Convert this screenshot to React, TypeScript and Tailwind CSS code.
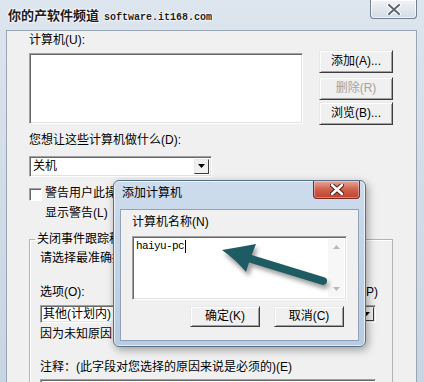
import type { ReactNode } from 'react'

function WinButton({ children, disabled, className = '' }: { children: ReactNode; disabled?: boolean; className?: string }) {
  return (
    <div
      className={`flex items-center justify-center bg-[#f0f0f0] border border-t-[#e8e8e8] border-l-[#e8e8e8] border-r-[#3c3c3c] border-b-[#3c3c3c] shadow-[inset_1px_1px_0_#ffffff,inset_-1px_-1px_0_#a0a0a0] ${disabled ? 'text-[#a3a3a3]' : 'text-black'} ${className}`}
    >
      {children}
    </div>
  )
}

function Arrow() {
  return (
    <svg width="8" height="5" viewBox="0 0 8 5">
      <path d="M0 0 H7 L3.5 4 Z" fill="#000" />
    </svg>
  )
}

function Combo({ text, className = '' }: { text: string; className?: string }) {
  return (
    <div
      className={`flex items-stretch bg-white border border-t-[#a0a0a0] border-l-[#a0a0a0] border-r-white border-b-white shadow-[inset_1px_1px_0_#696969,inset_-1px_-1px_0_#e3e3e3] p-[2px] ${className}`}
    >
      <span className="flex-1 pl-[1px] flex items-center">{text}</span>
      <div className="w-[15px] flex items-center justify-center bg-[#f0f0f0] border border-t-[#e8e8e8] border-l-[#e8e8e8] border-r-[#3c3c3c] border-b-[#3c3c3c]">
        <Arrow />
      </div>
    </div>
  )
}

export default function App() {
  return (
    <div className="relative w-[424px] h-[382px] overflow-hidden bg-gradient-to-b from-[#dde5ee] via-[#d2dce7] to-[#c8d5e2] font-['Liberation_Sans','Noto_Sans_CJK_SC',sans-serif] text-[12px] leading-[15px] text-black">
      {/* title bar */}
      <div className="flex h-[30px] items-start">
        <div className="ml-[8px] mt-[8px] flex items-baseline gap-[5px] text-[13px] font-bold leading-[15px] text-[#1c1c1c] [text-shadow:0_0_2px_#fff,0_0_2px_#fff,0_0_3px_#fff]">
          <span>你的产软件频道</span>
          <span className="font-['Liberation_Mono',monospace] text-[10px]">software.it168.com</span>
        </div>
        <div className="ml-auto mr-[7px] h-[19px] w-[47px] rounded-b-[4px] border border-t-0 border-[#707e8e] bg-gradient-to-b from-[#f1f4f7] to-[#d3dbe4] shadow-[inset_0_0_0_1px_rgba(255,255,255,0.7)] flex items-center justify-center">
          <svg width="14" height="11" viewBox="0 0 14 11">
            <path d="M2 1 L12 10 M12 1 L2 10" stroke="#fff" strokeWidth="4" strokeLinecap="round" />
            <path d="M2 1 L12 10 M12 1 L2 10" stroke="#5c6673" strokeWidth="2" strokeLinecap="round" />
          </svg>
        </div>
      </div>

      {/* client area */}
      <div className="ml-[6px] w-[411px] h-[360px] border border-[#97a5b5] bg-[#f0f0f0]">
        <div className="pl-[22px] pt-[2px]">
          <div className="flex">
            <div className="w-[274px]">
              <div>计算机(U):</div>
              <div className="mt-[5px] h-[71px] bg-white border border-t-[#a0a0a0] border-l-[#a0a0a0] border-r-white border-b-white shadow-[inset_1px_1px_0_#696969,inset_-1px_-1px_0_#e3e3e3]" />
            </div>
            <div className="ml-[16px] pt-[17px] flex flex-col">
              <WinButton className="h-[23px] w-[74px]">添加(A)...</WinButton>
              <WinButton className="mt-[4px] h-[23px] w-[74px]" disabled>
                删除(R)
              </WinButton>
              <WinButton className="mt-[2px] h-[23px] w-[74px]">浏览(B)...</WinButton>
            </div>
          </div>

          <div className="mt-[8px]">您想让这些计算机做什么(D):</div>
          <Combo text="关机" className="mt-[8px] w-[183px] h-[21px]" />

          <div className="mt-[9px] flex items-start">
            <div className="mt-[2px] h-[13px] w-[13px] bg-white border border-t-[#a0a0a0] border-l-[#a0a0a0] border-r-white border-b-white shadow-[inset_1px_1px_0_#696969]" />
            <span className="ml-[3px]">警告用户此操作</span>
          </div>
          <div className="mt-[5px] pl-[16px]">显示警告(L)</div>

          <fieldset className="mt-[11px] w-[364px] border border-[#b4b4b4] shadow-[inset_1px_1px_0_#fff] pl-[10px] pr-[14px] pb-[6px]">
            <legend className="ml-[-5px] px-[2px]">关闭事件跟踪程序</legend>
            <div className="mt-[4px]">请选择最准确描述您想关闭此计算机的原因</div>
            <div className="mt-[19px] flex justify-between">
              <span>选项(O):</span>
              <span>计划内(P)</span>
            </div>
            <Combo text="其他(计划内)" className="mt-[5px] h-[18px] w-[336px] !p-[1px]" />
            <div className="mt-[4px]">因为未知原因</div>
            <div className="mt-[18px]">注释：(此字段对您选择的原因来说是必须的)(E)</div>
            <div className="mt-[4px] h-[40px] w-[336px] bg-white border border-t-[#a0a0a0] border-l-[#a0a0a0] border-r-white border-b-white shadow-[inset_1px_1px_0_#696969]" />
          </fieldset>
        </div>
      </div>

      {/* add computer dialog */}
      <div className="absolute left-[113px] top-[180px] w-[253px] h-[167px] rounded-[6px] border border-[#566f8c] bg-gradient-to-b from-[#cddced] via-[#c2d3e6] to-[#b8cbe0] shadow-[inset_0_0_0_1px_rgba(255,255,255,0.65),2px_3px_8px_rgba(0,0,0,0.35)]">
        <div className="flex h-[28px] items-start">
          <div className="ml-[8px] mt-[5px]">添加计算机</div>
          <div className="ml-auto mr-[5px] h-[18px] w-[47px] rounded-b-[4px] border border-t-0 border-[#7a2a20] bg-gradient-to-b from-[#e9a597] via-[#d0604d] to-[#c0412c] shadow-[inset_0_0_0_1px_rgba(255,255,255,0.35)] flex items-center justify-center">
            <svg width="14" height="11" viewBox="0 0 14 11">
              <path d="M2 1 L12 10 M12 1 L2 10" stroke="#5a1a12" strokeWidth="4.5" strokeLinecap="round" />
              <path d="M2 1 L12 10 M12 1 L2 10" stroke="#fff" strokeWidth="2.5" strokeLinecap="round" />
            </svg>
          </div>
        </div>
        <div className="mx-[6px] h-[132px] border border-[#8fa2b8] bg-[#f0f0f0] pl-[11px] pt-[5px]">
          <div>计算机名称(N)</div>
          <div className="mt-[6px] flex h-[64px] w-[215px] bg-white border border-t-[#a0a0a0] border-l-[#a0a0a0] border-r-white border-b-white shadow-[inset_1px_1px_0_#696969,inset_-1px_-1px_0_#e3e3e3] p-[2px]">
            <div className="flex-1 pl-[1px] pt-[1px] flex items-start">
              <span className="font-['Liberation_Mono',monospace] text-[11px] leading-[13px] tracking-[-0.6px]">haiyu-pc</span>
              <span className="ml-[1px] h-[13px] w-[1px] bg-black" />
            </div>
            <div className="w-[16px] flex flex-col items-center justify-between bg-[#f7f7f7] py-[6px]">
              <svg width="7" height="4" viewBox="0 0 7 4">
                <path d="M0 4 H7 L3.5 0 Z" fill="#b8b8b8" />
              </svg>
              <svg width="7" height="4" viewBox="0 0 7 4">
                <path d="M0 0 H7 L3.5 4 Z" fill="#b8b8b8" />
              </svg>
            </div>
          </div>
          <div className="mt-[6px] flex justify-end gap-[14px] pr-[14px]">
            <WinButton className="h-[21px] w-[70px]">确定(K)</WinButton>
            <WinButton className="h-[21px] w-[70px]">取消(C)</WinButton>
          </div>
        </div>
      </div>

      {/* annotation arrow */}
      <svg className="absolute inset-0 pointer-events-none" width="424" height="382" viewBox="0 0 424 382">
        <defs>
          <filter id="sh" x="-20%" y="-20%" width="140%" height="160%">
            <feGaussianBlur stdDeviation="2" />
          </filter>
        </defs>
        <g opacity="0.45" filter="url(#sh)" transform="translate(2 4)">
          <path d="M249 258 L323 281" stroke="#333" strokeWidth="8" strokeLinecap="round" />
          <path d="M222 250 L256 244 L247 272 Z" fill="#333" />
        </g>
        <path d="M248 258 L323 281" stroke="#1f5b62" strokeWidth="8" strokeLinecap="round" />
        <path d="M222 250 Q240 247 256 244 Q250 258 246 272 Q236 260 222 250 Z" fill="#1f5b62" />
      </svg>
    </div>
  )
}
